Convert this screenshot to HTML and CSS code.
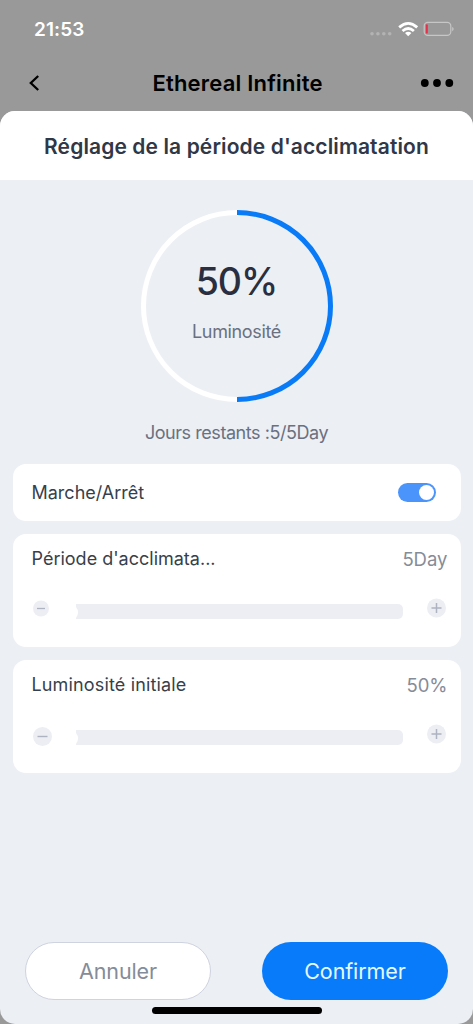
FILE: index.html
```html
<!DOCTYPE html>
<html lang="fr">
<head>
<meta charset="utf-8">
<title>Ethereal Infinite</title>
<link rel="stylesheet" href="styles.css">
</head>
<body>
<div class="screen">
  <header class="status">
    <span class="time">21:53</span>
    <svg class="status-icons" width="86" height="18" viewBox="0 0 86 18">
      <g fill="#b3b3b3"><circle cx="3" cy="13.7" r="1.8"/><circle cx="8.9" cy="13.7" r="1.8"/><circle cx="14.8" cy="13.7" r="1.8"/><circle cx="20.7" cy="13.7" r="1.8"/></g>
      <g fill="none" stroke="#fff" stroke-width="2.8"><path d="M30.200 7.400Q39.200-.6 48.200 7.400"/><path d="M33.500 11Q39.200 6 44.900 11"/></g>
      <path d="M36 13Q39.200 10.400 42.400 13L39.200 16.200Z" fill="#fff"/>
      <rect x="55.200" y="2.400" width="26.600" height="13" rx="3.600" fill="none" stroke="#c6c6c6" stroke-width="1.200"/>
      <rect x="56.900" y="4.200" width="1.900" height="9.400" rx=".9" fill="#e5304a"/>
      <path d="M83.200 7v4.200q1.500-.7 1.500-2.100T83.200 7Z" fill="#c6c6c6"/>
    </svg>
  </header>
  <nav class="nav">
    <svg width="12" height="18" viewBox="0 0 12 18"><path d="M10.200 2 2.800 9l7.400 7" fill="none" stroke="#000" stroke-width="2.300"/></svg>
    <h1 class="nav-title">Ethereal Infinite</h1>
    <svg width="34" height="10" viewBox="0 0 34 10"><circle cx="4.800" cy="5" r="3.900"/><circle cx="17" cy="5" r="3.900"/><circle cx="29.300" cy="5" r="3.900"/></svg>
  </nav>
  <main class="sheet">
    <h2 class="sheet-title"><span class="sheet-label">Réglage de la période d'acclimatation</span></h2>
    <section class="gauge">
      <svg class="ring" width="192" height="192" viewBox="0 0 192 192" fill="none" stroke-width="5"><path d="M96 2.500a93.500 93.500 0 0 0 0 187" stroke="#fff"/><path d="M96 2.500a93.500 93.500 0 0 1 0 187" stroke="#0a7bf7"/></svg>
      <div class="reading"><span class="percent">50%</span><span class="caption">Luminosité</span></div>
    </section>
    <p class="remaining"><span class="remaining-text">Jours restants :5/5Day</span></p>
    <div class="cards">
      <section class="card power"><span class="label label-power">Marche/Arrêt</span><span class="switch"><span class="thumb"></span></span></section>
      <section class="card">
        <div class="heading"><span class="label label-period">Période d'acclimata...</span><span class="value">5Day</span></div>
        <div class="control">
          <svg class="minus" width="20" height="20" viewBox="0 0 20 20"><circle cx="9" cy="10.500" r="8" fill="#eceef3"/><path d="M5 10.500h8" stroke="#adb3c1" stroke-width="1.300"/></svg>
          <div class="track"><span class="handle"></span></div>
          <svg class="plus" width="20" height="20" viewBox="0 0 20 20"><circle cx="10.500" cy="10" r="9.500" fill="#eceef3"/><path d="M5.500 10h10M10.500 5v10" stroke="#adb3c1" stroke-width="1.500"/></svg>
        </div>
      </section>
      <section class="card">
        <div class="heading"><span class="label label-initial">Luminosité initiale</span><span class="value">50%</span></div>
        <div class="control">
          <svg class="minus" width="20" height="20" viewBox="0 0 20 20"><circle cx="10.500" cy="12.500" r="9.500" fill="#eceef3"/><path d="M5.500 12.500h10" stroke="#adb3c1" stroke-width="1.400"/></svg>
          <div class="track"><span class="handle"></span></div>
          <svg class="plus" width="20" height="20" viewBox="0 0 20 20"><circle cx="10.500" cy="10" r="9.500" fill="#eceef3"/><path d="M5.500 10h10M10.500 5v10" stroke="#adb3c1" stroke-width="1.500"/></svg>
        </div>
      </section>
    </div>
    <footer class="actions"><button class="button cancel">Annuler</button><button class="button confirm">Confirmer</button></footer>
    <div class="home-indicator"></div>
  </main>
</div>
</body>
</html>
```
FILE: styles.css
```css
* { box-sizing: border-box; margin: 0; }
body { font-family: Inter, "Liberation Sans", sans-serif; font-variant-ligatures: none; background: #999; }
svg { display: block; flex: none; overflow: visible; }
span { white-space: nowrap; }
.screen { width: 473px; height: 1024px; overflow: hidden; background: #999; display: flex; flex-direction: column; }
.status { height: 58px; padding: 20px 18px 20px 34px; display: flex; align-items: center; justify-content: space-between; }
.time { color: #fff; font-size: 19px; font-weight: 600; letter-spacing: .1px; }
.nav { height: 53px; padding: 0 19px 3px 28px; display: grid; grid-template-columns: 27px 1fr 34px; align-items: center; }
.nav-title { font-size: 22px; line-height: 28px; font-weight: 600; text-align: center; letter-spacing: .2px; }
.sheet { height: 913px; background: #eceff4; border-radius: 15px; overflow: hidden; display: flex; flex-direction: column; align-items: center; }
.sheet-title { width: 100%; height: 69px; padding-top: 1px; background: #fff; color: #303747; display: grid; place-items: center; font-size: 21px; font-weight: 600; letter-spacing: .11px; }
.gauge { margin-top: 30px; display: grid; place-items: center; }
.gauge > * { grid-area: 1 / 1; }
.reading { display: flex; flex-direction: column; align-items: center; padding-bottom: 9px; }
.percent { color: #292f40; font-size: 37.500px; line-height: 45px; font-weight: 500; letter-spacing: -1px; }
.caption { color: #697181; font-size: 18px; line-height: 24px; margin-top: 16px; letter-spacing: -.35px; }
.remaining { height: 62px; padding-top: 18px; color: #697181; font-size: 18px; line-height: 26px; letter-spacing: -.45px; }
.cards { width: 448px; display: grid; gap: 13px; }
.card { height: 113px; background: #fff; border-radius: 13px; padding: 12px 13px 0 19px; }
.power { height: 57px; padding: 0 25px 0 19px; display: flex; align-items: center; justify-content: space-between; }
.label { color: #383f4c; font-size: 18px; line-height: 26px; }
.label-initial { letter-spacing: .15px; }
.value { color: #858c99; font-size: 18.500px; line-height: 26px; }
.heading { display: flex; justify-content: space-between; }
.switch { width: 38px; height: 19px; border-radius: 10px; background: #4b94fc; padding: 2px; display: flex; justify-content: flex-end; }
.thumb { width: 15px; height: 15px; border-radius: 50%; background: #fff; }
.control { display: flex; justify-content: space-between; align-items: flex-start; padding: 26px 2px 0 0; }
.track { width: 327px; height: 15px; margin: 6px 0 0 1px; border-radius: 0 5px 5px 0; background: #eceef3; overflow: hidden; }
.handle { display: block; width: 17px; height: 17px; margin-left: -15px; border-radius: 50%; background: #fff; }
.actions { width: 423px; margin-top: 169px; display: flex; justify-content: space-between; }
.button { width: 186px; height: 58px; border-radius: 29px; font: 400 21.500px Inter, sans-serif; padding: 0; letter-spacing: -.1px; }
.cancel { background: #fff; color: #858c99; border: 1px solid #cfd3df; }
.confirm { background: #087bfa; color: #e5f9ff; border: 0; }
.home-indicator { width: 170px; height: 7px; margin-top: 7px; border-radius: 4px; background: #000; }
```
